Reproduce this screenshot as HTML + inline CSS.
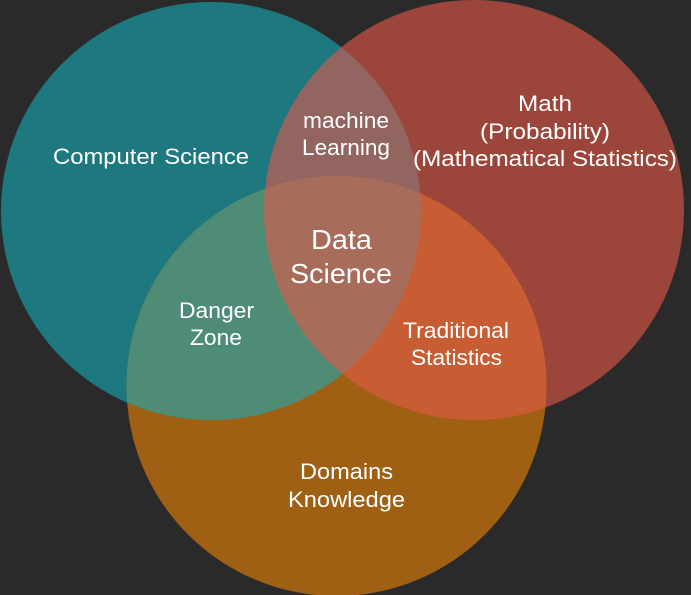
<!DOCTYPE html>
<html><head><style>html,body{margin:0;padding:0;background:#2a2a2a;}svg{display:block}text{font-family:"Liberation Sans",sans-serif;fill:#fff}</style></head><body>
<svg width="691" height="595" viewBox="0 0 691 595">
<defs>
<clipPath id="cT"><ellipse cx="211" cy="211" rx="210" ry="209"/></clipPath>
<clipPath id="cR"><ellipse cx="474" cy="210" rx="210" ry="210"/></clipPath>
</defs>
<rect width="691" height="595" fill="#2a2a2a"/>
<ellipse cx="211" cy="211" rx="210" ry="209" fill="#1e7880"/>
<ellipse cx="474" cy="210" rx="210" ry="210" fill="#9c463b"/>
<ellipse cx="336.5" cy="386" rx="210" ry="210" fill="#a06014"/>
<g clip-path="url(#cT)"><ellipse cx="474" cy="210" rx="210" ry="210" fill="#926560"/>
<ellipse cx="336.5" cy="386" rx="210" ry="210" fill="#4e8c75"/></g>
<g clip-path="url(#cR)"><ellipse cx="336.5" cy="386" rx="210" ry="210" fill="#c85c33"/></g>
<g clip-path="url(#cR)"><g clip-path="url(#cT)"><ellipse cx="336.5" cy="386" rx="210" ry="210" fill="#a86c5a"/></g></g>
<g font-size="22.5">
<text x="53" y="164" textLength="196" lengthAdjust="spacingAndGlyphs">Computer Science</text>
<text x="303" y="128" textLength="86" lengthAdjust="spacingAndGlyphs">machine</text>
<text x="302" y="155" textLength="88" lengthAdjust="spacingAndGlyphs">Learning</text>
<text x="518" y="111" textLength="54" lengthAdjust="spacingAndGlyphs">Math</text>
<text x="480" y="139" textLength="130" lengthAdjust="spacingAndGlyphs">(Probability)</text>
<text x="413" y="166" textLength="264" lengthAdjust="spacingAndGlyphs">(Mathematical Statistics)</text>
<text x="179" y="318" textLength="75" lengthAdjust="spacingAndGlyphs">Danger</text>
<text x="190" y="345" textLength="52" lengthAdjust="spacingAndGlyphs">Zone</text>
<text x="403" y="338" textLength="106" lengthAdjust="spacingAndGlyphs">Traditional</text>
<text x="411" y="365" textLength="91" lengthAdjust="spacingAndGlyphs">Statistics</text>
<text x="300" y="479" textLength="93" lengthAdjust="spacingAndGlyphs">Domains</text>
<text x="288" y="507" textLength="117" lengthAdjust="spacingAndGlyphs">Knowledge</text>
</g>
<text x="311" y="249" font-size="28" textLength="61" lengthAdjust="spacingAndGlyphs">Data</text>
<text x="290" y="283" font-size="28" textLength="102" lengthAdjust="spacingAndGlyphs">Science</text>
</svg>
</body></html>
